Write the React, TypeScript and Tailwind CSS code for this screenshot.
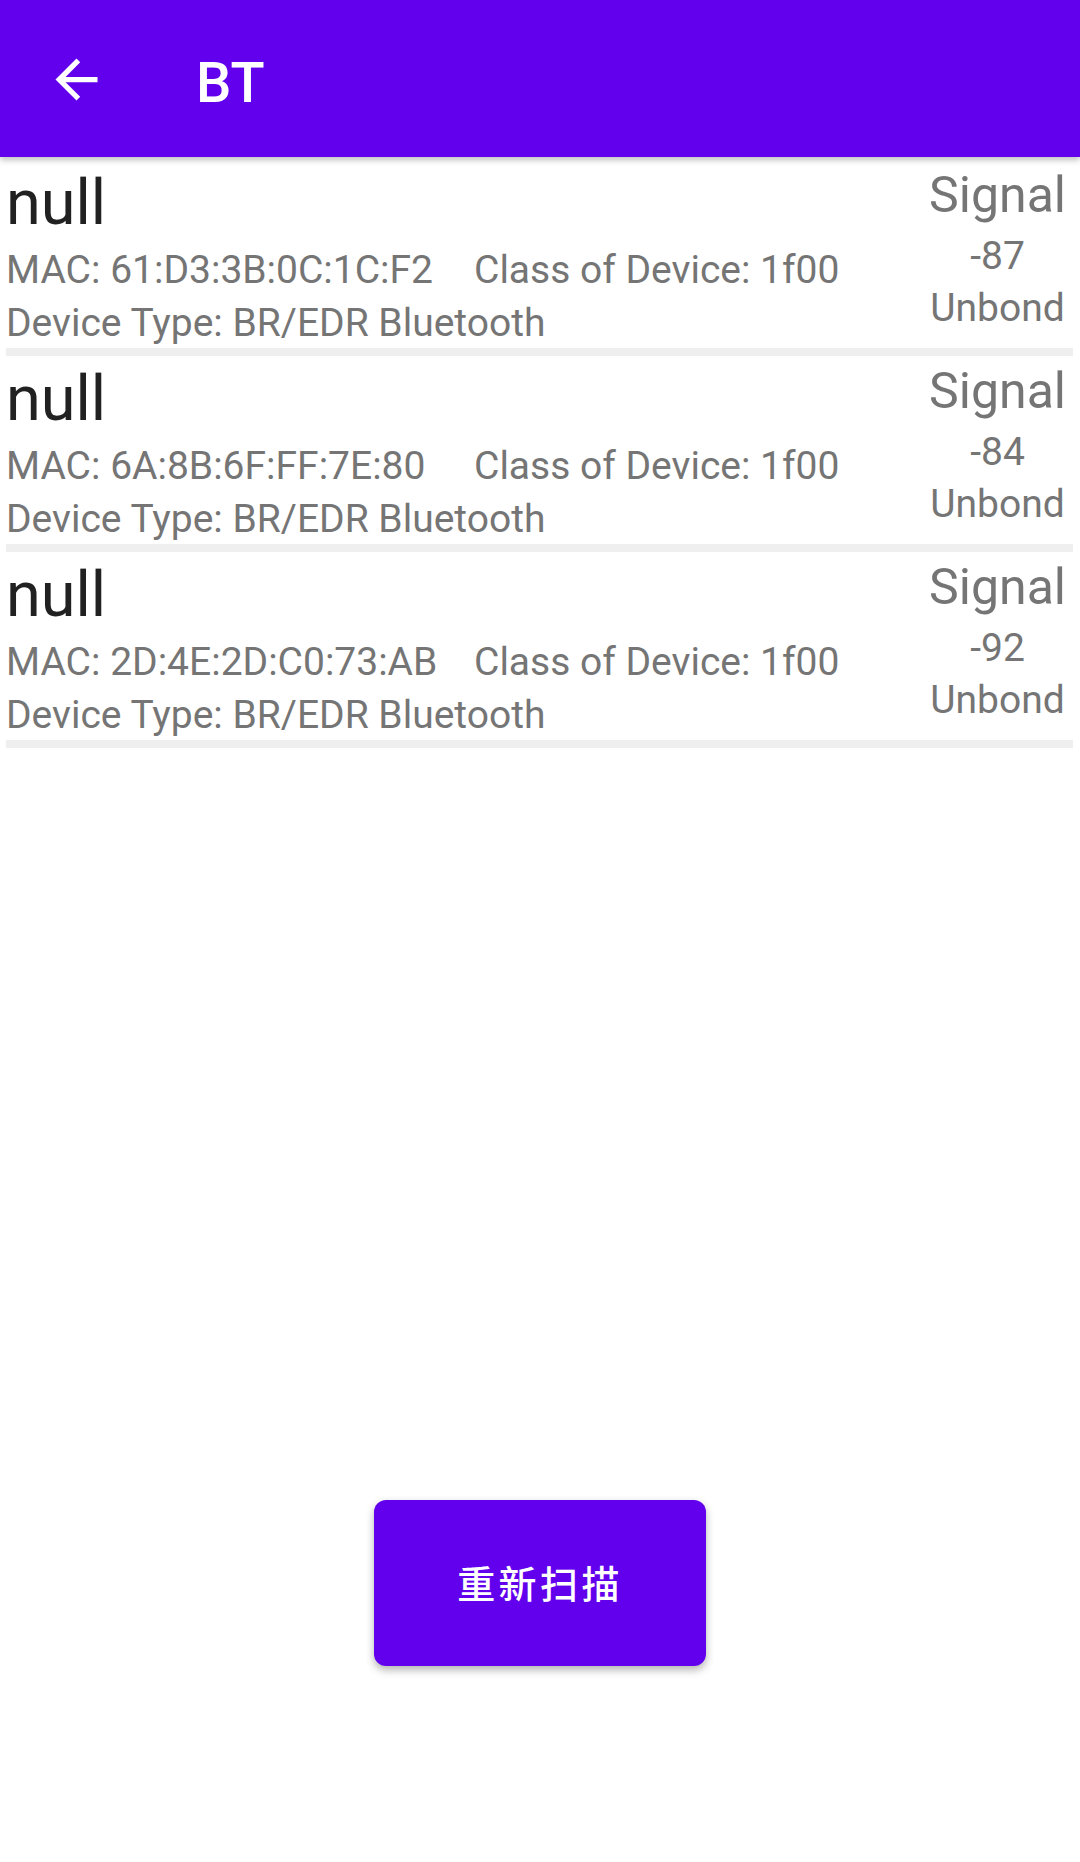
const devices = [
  { name: "null", mac: "61:D3:3B:0C:1C:F2", cod: "1f00", type: "BR/EDR Bluetooth", rssi: -87, bond: "Unbond" },
  { name: "null", mac: "6A:8B:6F:FF:7E:80", cod: "1f00", type: "BR/EDR Bluetooth", rssi: -84, bond: "Unbond" },
  { name: "null", mac: "2D:4E:2D:C0:73:AB", cod: "1f00", type: "BR/EDR Bluetooth", rssi: -92, bond: "Unbond" },
];

function BackArrow() {
  return (
    <svg viewBox="0 0 24 24" className="w-[63px] h-[63px] fill-white">
      <path d="M20 11H7.83l5.59-5.59L12 4l-8 8 8 8 1.41-1.41L7.83 13H20v-2z" />
    </svg>
  );
}

export default function App() {
  return (
    <div
      className="h-[1862px] w-[1080px] bg-white flex flex-col"
      style={{ fontFamily: 'Roboto, "Noto Sans CJK SC", sans-serif' }}
    >
      {/* toolbar */}
      <header className="relative z-10 h-[157px] shrink-0 bg-[#6200ee] shadow-[0_3px_6px_rgba(0,0,0,0.25)] flex items-start">
        <div className="ml-[45px] mt-[48px]">
          <BackArrow />
        </div>
        <h1 className="ml-[88px] mt-[52px] text-[56px] leading-[62px] font-medium text-white">BT</h1>
      </header>

      {/* device list */}
      <div className="pt-[3px]">
        {devices.map((d, i) => (
          <div key={i}>
            <div className="h-[188px] flex justify-between pl-[6px] pr-[14px]">
              <div className="flex flex-col">
                <div className="pt-[6px] text-[63px] leading-[74px] text-[#212121]">{d.name}</div>
                <div className="mt-[4px] flex text-[39px] leading-[53px] text-[#757575] whitespace-nowrap">
                  <span className="w-[468px]">MAC: {d.mac}</span>
                  <span>Class of Device: {d.cod}</span>
                </div>
                <div className="text-[39px] leading-[53px] text-[#757575] whitespace-nowrap">
                  Device Type: {d.type}
                </div>
              </div>
              <div className="flex flex-col items-center text-[#757575]">
                <div className="pt-[7px] text-[50px] leading-[56px]">Signal</div>
                <div className="mt-[7px] text-[39px] leading-[52px]">{d.rssi}</div>
                <div className="text-[39px] leading-[52px]">{d.bond}</div>
              </div>
            </div>
            <div className="h-[8px] ml-[6px] mr-[7px] bg-[#efefef]" />
          </div>
        ))}
      </div>

      {/* rescan button */}
      <div className="mt-auto mb-[196px] flex justify-center">
        <button className="w-[332px] h-[166px] pt-[4px] rounded-[12px] bg-[#6200ee] text-white text-[38px] font-medium tracking-[0.0892em] shadow-[0_4px_8px_rgba(0,0,0,0.3)]">
          重新扫描
        </button>
      </div>
    </div>
  );
}
